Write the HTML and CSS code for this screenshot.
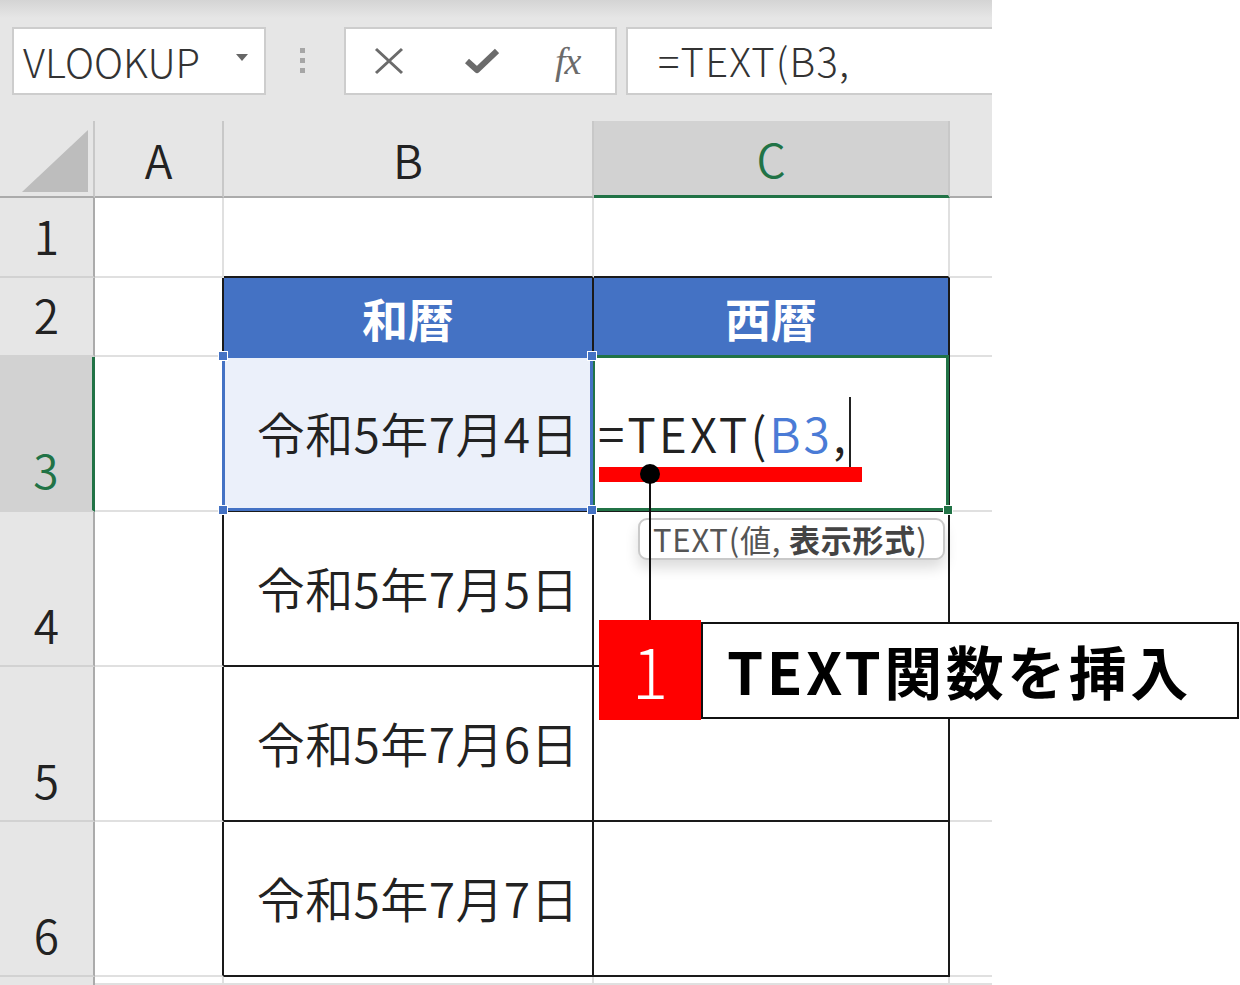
FILE: index.html
```html
<!DOCTYPE html>
<html lang="ja">
<head>
    <meta charset="UTF-8">
    <meta name="viewport" content="width=device-width, initial-scale=1.0">
    <title>TEXT関数を挿入</title>
    <link rel="stylesheet" href="styles.css">
</head>
<body>

<div class="window">
    <!-- Formula Bar -->
    <div class="formula-bar">
        <div class="name-box">
            <span class="name">VLOOKUP</span>
            <span class="caret"></span>
        </div>
        <div class="grip"><i></i><i></i><i></i></div>
        <div class="fx-buttons">
            <svg class="btn-cancel" width="32" height="28" viewBox="0 0 32 28">
                <path d="M3 2 L29 26 M29 2 L3 26" stroke="#6b6b6b" stroke-width="3" fill="none"/>
            </svg>
            <svg class="btn-enter" width="34" height="26" viewBox="0 0 34 26">
                <path d="M2 13 L12 22 L32 3" stroke="#6b6b6b" stroke-width="6" fill="none" stroke-linejoin="round"/>
            </svg>
            <span class="btn-fx">fx</span>
        </div>
        <div class="formula-input">=TEXT(B3,</div>
    </div>

    <!-- Sheet -->
    <div class="sheet">
        <div class="cell corner">
            <svg width="93" height="75" viewBox="0 0 93 75"><polygon points="22,71 88,9 88,71" fill="#bdbdbd"/></svg>
        </div>
        <div class="cell ch">A</div>
        <div class="cell ch">B</div>
        <div class="cell ch active">C</div>
        <div class="cell ch last"></div>

        <div class="cell rh">1</div>
        <div class="cell"></div>
        <div class="cell tb-b"></div>
        <div class="cell tb-b"></div>
        <div class="cell last"></div>

        <div class="cell rh">2</div>
        <div class="cell tb-r"></div>
        <div class="cell head tb-r tb-b">和暦</div>
        <div class="cell head tb-r tb-b">西暦</div>
        <div class="cell last"></div>

        <div class="cell rh active">3</div>
        <div class="cell tb-r"></div>
        <div class="cell date tb-r tb-b picked">令和5年7月4日
            <div class="range blue"><span class="h tl"></span><span class="h tr"></span><span class="h bl"></span><span class="h br"></span></div>
        </div>
        <div class="cell edit tb-r tb-b">=TEXT(<span class="ref">B3</span>,<span class="cursor"></span>
            <div class="range green"><span class="h br"></span></div>
        </div>
        <div class="cell last"></div>

        <div class="cell rh">4</div>
        <div class="cell tb-r"></div>
        <div class="cell date tb-r tb-b">令和5年7月5日</div>
        <div class="cell tb-r tb-b"></div>
        <div class="cell last"></div>

        <div class="cell rh">5</div>
        <div class="cell tb-r"></div>
        <div class="cell date tb-r tb-b">令和5年7月6日</div>
        <div class="cell tb-r tb-b"></div>
        <div class="cell last"></div>

        <div class="cell rh">6</div>
        <div class="cell tb-r"></div>
        <div class="cell date tb-r tb-b">令和5年7月7日</div>
        <div class="cell tb-r tb-b"></div>
        <div class="cell last"></div>

        <div class="cell rh"></div>
        <div class="cell"></div>
        <div class="cell"></div>
        <div class="cell"></div>
        <div class="cell last"></div>
    </div>
</div>

<!-- Annotation -->
<div class="tip">TEXT(値, <b>表示形式</b>)</div>
<div class="mark-bar"></div>
<div class="mark-line"></div>
<div class="mark-dot"></div>
<div class="callout">
    <div class="step">1</div>
    <div class="label">TEXT関数を挿入</div>
</div>

</body>
</html>
```

FILE: styles.css
```css
body {
    margin: 0;
    padding: 0;
    background-color: #fff;
    font-family: "Noto Sans CJK JP", sans-serif;
    font-weight: 350;
    color: #222;
    position: relative;
    width: 1240px;
    height: 985px;
    overflow: hidden;
}
.window {
    width: 992px;
}

/* formula bar */
.formula-bar {
    height: 121px;
    box-sizing: border-box;
    padding-top: 27px;
    padding-left: 12px;
    display: flex;
    align-items: flex-start;
    background: linear-gradient(#d4d4d4 0, #e6e6e6 18px, #e6e6e6 100%);
}
.name-box {
    width: 254px;
    height: 68px;
    box-sizing: border-box;
    background: #fff;
    border: 2px solid #cdcdcd;
    display: flex;
    align-items: center;
    padding-left: 9px;
}
.name {
    font-size: 40px;
    font-weight: 300;
    color: #333;
    flex: 1;
}
.caret {
    width: 0;
    height: 0;
    border-left: 6px solid transparent;
    border-right: 6px solid transparent;
    border-top: 7px solid #666;
    margin-right: 16px;
    margin-bottom: 8px;
}
.grip {
    width: 6px;
    margin: 21px 38px 0 34px;
    display: flex;
    flex-direction: column;
    gap: 5px;
}
.grip i {
    display: block;
    width: 5px;
    height: 5px;
    background: #a6a6a6;
}
.fx-buttons {
    width: 273px;
    height: 68px;
    box-sizing: border-box;
    background: #fff;
    border: 2px solid #cdcdcd;
    display: flex;
    align-items: center;
    padding-left: 27px;
}
.btn-enter {
    margin-left: 60px;
}
.btn-fx {
    margin-left: 56px;
    font-family: "Liberation Serif", serif;
    font-style: italic;
    font-size: 38px;
    color: #6b6b6b;
    letter-spacing: -1px;
}
.formula-input {
    margin-left: 9px;
    flex: 1;
    height: 68px;
    box-sizing: border-box;
    background: #fff;
    border: 2px solid #cdcdcd;
    border-right: none;
    padding-left: 30px;
    font-size: 40px;
    font-weight: 300;
    letter-spacing: 1.2px;
    line-height: 62px;
    color: #333;
}

/* sheet grid */
.sheet {
    display: grid;
    grid-template-columns: 95px 129px 370px 356px 42px;
    grid-template-rows: 77px 80px 79px 155px 155px 155px 155px 8px;
}
.cell {
    box-sizing: border-box;
    border-right: 2px solid #e0e0e0;
    border-bottom: 2px solid #e0e0e0;
    display: flex;
    align-items: center;
    position: relative;
}
.cell.last {
    border-right: none;
}
.tb-r {
    border-right-color: #1a1a1a;
}
.tb-b {
    border-bottom-color: #1a1a1a;
}
.corner {
    background: #e6e6e6;
    border-right-color: #c8c8c8;
    border-bottom-color: #ababab;
}
.ch {
    background: #e6e6e6;
    border-right-color: #c8c8c8;
    border-bottom-color: #ababab;
    justify-content: center;
    font-size: 46px;
    color: #222;
}
.ch.active {
    background: #d2d2d2;
    color: #217346;
    border-bottom: 3px solid #217346;
}
.rh {
    background: #e6e6e6;
    border-right-color: #ababab;
    border-bottom-color: #d2d2d2;
    justify-content: center;
    align-items: flex-end;
    padding-bottom: 18px;
    font-size: 46px;
    line-height: 1;
    color: #222;
}
.rh.active {
    background: #d2d2d2;
    color: #217346;
    border-right: 3px solid #217346;
}
.head {
    background: #4472c4;
    color: #fff;
    font-weight: bold;
    font-size: 46px;
    justify-content: center;
}
.date {
    justify-content: flex-end;
    padding-right: 13px;
    padding-bottom: 4px;
    font-size: 48px;
    letter-spacing: 0.4px;
    color: #222;
}
.picked {
    background: #ebf0fa;
}
.edit {
    padding-left: 4px;
    padding-bottom: 4px;
    font-size: 48px;
    letter-spacing: 3px;
    color: #222;
}
.ref {
    color: #4a7bd6;
}
.cursor {
    display: inline-block;
    width: 2px;
    height: 70px;
    background: #222;
    margin-left: 0;
}

/* selection ranges */
.range {
    position: absolute;
    top: -2px;
    left: -2px;
    right: -1px;
    bottom: -1px;
    border: 3px solid;
}
.range.blue {
    border-color: #4472c4;
    z-index: 3;
}
.range.green {
    border-color: #217346;
    z-index: 2;
}
.h {
    position: absolute;
    width: 8px;
    height: 8px;
    border: 1px solid #fff;
    background: #4472c4;
}
.green .h {
    background: #217346;
}
.tl { top: -7px; left: -7px; }
.tr { top: -7px; right: -7px; }
.bl { bottom: -7px; left: -7px; }
.br { bottom: -7px; right: -7px; }

/* annotation */
.tip {
    position: absolute;
    left: 638px;
    top: 518px;
    width: 307px;
    height: 42px;
    box-sizing: border-box;
    border: 2px solid #c9c9c9;
    border-radius: 9px;
    background: #fff;
    box-shadow: 0 8px 14px rgba(0, 0, 0, 0.14);
    font-size: 31px;
    font-weight: 400;
    line-height: 38px;
    letter-spacing: 0.8px;
    padding-left: 13px;
    color: #555;
    white-space: nowrap;
    z-index: 5;
}
.tip b {
    font-weight: bold;
    color: #444;
}
.mark-bar {
    position: absolute;
    left: 599px;
    top: 467px;
    width: 263px;
    height: 15px;
    background: #ff0000;
    z-index: 6;
}
.mark-line {
    position: absolute;
    left: 649px;
    top: 474px;
    width: 2px;
    height: 148px;
    background: #111;
    z-index: 6;
}
.mark-dot {
    position: absolute;
    left: 640px;
    top: 464px;
    width: 20px;
    height: 20px;
    border-radius: 50%;
    background: #000;
    z-index: 7;
}
.callout {
    position: absolute;
    left: 599px;
    top: 620px;
    display: flex;
    align-items: center;
    z-index: 8;
}
.step {
    width: 102px;
    height: 100px;
    background: #ff0000;
    color: #fff;
    font-size: 68px;
    font-weight: 300;
    line-height: 100px;
    text-align: center;
}
.label {
    width: 538px;
    height: 97px;
    box-sizing: border-box;
    border: 2px solid #111;
    background: #fff;
    padding-left: 24px;
    font-size: 58px;
    font-weight: bold;
    line-height: 92px;
    letter-spacing: 3.5px;
    color: #000;
    white-space: nowrap;
}
```
